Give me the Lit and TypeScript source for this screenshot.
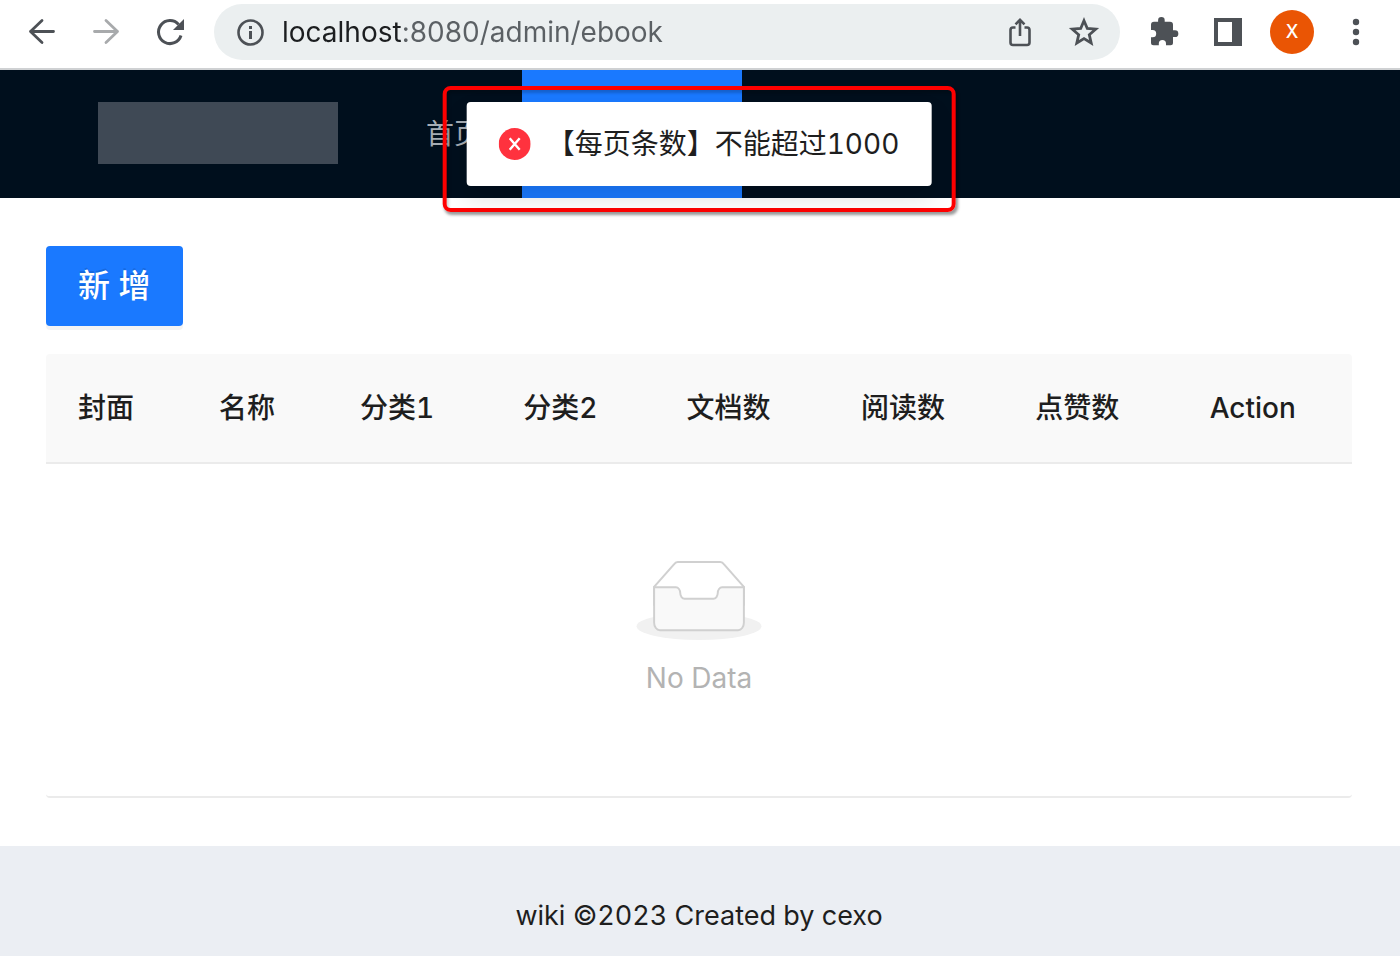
import { LitElement, html, svg, css } from "lit";
import { customElement, property } from "lit/decorators.js";

const glyphs = {
  back: svg`<path d="M27.500 15.500H4.500M16 4.500L4.500 15.500L16 26.500" fill="none" stroke="currentColor" stroke-width="2.800" stroke-linecap="round" stroke-linejoin="round"/>`,
  forward: svg`<path d="M4.500 15.500H27.500M16 4.500L27.500 15.500L16 26.500" fill="none" stroke="currentColor" stroke-width="2.800" stroke-linecap="round" stroke-linejoin="round"/>`,
  reload: svg`<path d="M27 19.500A11.500 11.500 0 1 1 24.600 8.400" fill="none" stroke="currentColor" stroke-width="3"/><path d="M30 3V14H19Z" fill="currentColor"/>`,
  info: svg`<circle cx="16.500" cy="16.500" r="12" fill="none" stroke="currentColor" stroke-width="2.600"/><path d="M15 10h3v3h-3zM15 15h3v8h-3z" fill="currentColor"/>`,
  share: svg`<path d="M11.500 11.500H9a2.500 2.500 0 0 0-2.500 2.500v12.500A2.500 2.500 0 0 0 9 29h14a2.500 2.500 0 0 0 2.500-2.500V14a2.500 2.500 0 0 0-2.500-2.500h-2.500M16 20V4M11.500 8.300L16 3.800l4.500 4.500" fill="none" stroke="currentColor" stroke-width="2.600"/>`,
  star: svg`<path d="M16 4.700l3.300 7.800 8.400.7-6.400 5.500 1.900 8.300L16 22.600 8.800 27l1.900-8.300-6.400-5.500 8.400-.7z" fill="none" stroke="currentColor" stroke-width="2.800" stroke-linejoin="miter"/>`,
  puzzle: svg`<path d="M26 14.500h-2V9a3 3 0 0 0-3-3h-5.300V4.600a3.300 3.300 0 0 0-6.600 0V6H5a3 3 0 0 0-3 3v5.300h1.600a3.600 3.600 0 0 1 0 7.200H2V27a2.500 2.500 0 0 0 2.500 2.500h5.300v-1.600a3.600 3.600 0 0 1 7.200 0v1.600h4.500A2.500 2.500 0 0 0 24 27v-5.800h2a3.350 3.350 0 0 0 0-6.700z" fill="currentColor" transform="translate(1 -.200)"/>`,
  panel: svg`<path d="M2 2h28v28H2zM6 6v20h14V6z" fill="currentColor" fill-rule="evenodd"/>`,
  more: svg`<g fill="currentColor"><circle cx="16" cy="6" r="3.200"/><circle cx="16" cy="16" r="3.200"/><circle cx="16" cy="26" r="3.200"/></g>`,
};

@customElement("ui-glyph")
class UiGlyph extends LitElement {
  @property() name: keyof typeof glyphs = "info";
  static styles = css`
    :host { display: block; width: 32px; height: 32px; }
    svg { display: block; }
  `;
  render() {
    return html`<svg width="32" height="32" viewBox="0 0 32 32" aria-hidden="true">${glyphs[this.name]}</svg>`;
  }
}

@customElement("browser-bar")
class BrowserBar extends LitElement {
  static styles = css`
    :host {
      display: flex; align-items: center; box-sizing: border-box;
      padding: 4px 28px 8px 26px; background: #fff;
      border-bottom: 2px solid #cfd1d3; color: #4d5156;
      font-family: Inter, "Noto Sans CJK SC", sans-serif;
    }
    button { border: 0; padding: 0; background: none; color: inherit; font: inherit; cursor: pointer; }
    .nav { display: flex; gap: 32px; margin-right: 28px; }
    .nav button:disabled { color: #a8aaac; }
    .address {
      flex: 1; min-width: 0; display: flex; align-items: center;
      height: 56px; padding: 0 20px; border-radius: 28px; background: #ebeff0;
    }
    .url {
      flex: 1; min-width: 0; margin: 0 16px; padding: 0; border: 0; outline: 0;
      height: 40px; font: 400 28px/40px Inter, sans-serif; color: #4d5156;
      background: linear-gradient(90deg, #1c1e20 120px, #5b6064 120px);
      -webkit-background-clip: text; background-clip: text;
      -webkit-text-fill-color: transparent;
    }
    .actions { display: flex; gap: 32px; }
    .tools { display: flex; align-items: center; gap: 32px; margin-left: 28px; }
    .avatar {
      width: 44px; height: 44px; margin: 0 -6px; border-radius: 50%;
      background: #ea5504; color: #fff; font-size: 18px; line-height: 44px; font-weight: 500;
    }
  `;
  render() {
    return html`
      <div class="nav">
        <button aria-label="Back"><ui-glyph name="back"></ui-glyph></button>
        <button aria-label="Forward" disabled><ui-glyph name="forward"></ui-glyph></button>
        <button aria-label="Reload"><ui-glyph name="reload"></ui-glyph></button>
      </div>
      <div class="address">
        <button aria-label="Site information"><ui-glyph name="info"></ui-glyph></button>
        <input class="url" type="text" aria-label="Address" value="localhost:8080/admin/ebook" spellcheck="false" />
        <div class="actions">
          <button aria-label="Share"><ui-glyph name="share"></ui-glyph></button>
          <button aria-label="Bookmark"><ui-glyph name="star"></ui-glyph></button>
        </div>
      </div>
      <div class="tools">
        <button aria-label="Extensions"><ui-glyph name="puzzle"></ui-glyph></button>
        <button aria-label="Side panel"><ui-glyph name="panel"></ui-glyph></button>
        <button class="avatar">X</button>
        <button aria-label="Menu"><ui-glyph name="more"></ui-glyph></button>
      </div>
    `;
  }
}

@customElement("app-root")
class AppRoot extends LitElement {
  static styles = css`
    :host {
      display: flex; flex-direction: column; min-height: 100vh; position: relative;
      background: #fff; color: #1e1e1e;
      font: 400 28px/44px Inter, "Noto Sans CJK SC", sans-serif;
      font-variant-numeric: tabular-nums;
    }
    .header { display: flex; height: 128px; padding: 0 98px; background: #000f1d; }
    .logo { width: 240px; height: 62px; margin: 32px 48px 0 0; background: #3f4955; }
    .menu { display: flex; margin: 0; padding: 0; list-style: none; line-height: 128px; }
    .menu a { display: block; padding: 0 40px; color: #a6adb4; text-decoration: none; }
    .current { width: 220px; background: #1a79ff; }
    .frame {
      position: absolute; top: 86px; left: 50%; transform: translateX(-50%);
      margin-left: -1px; padding: 12px 20px 22px; white-space: nowrap;
      border: 4px solid #fe0000; border-radius: 8px;
      box-shadow: 2px 3px 3px rgba(0, 0, 0, 0.4), inset 2px 3px 3px rgba(0, 0, 0, 0.2);
    }
    .toast {
      display: flex; align-items: center; gap: 16px; padding: 20px 32px;
      background: #fff; border-radius: 4px; box-shadow: 0 12px 24px rgba(0, 0, 0, 0.12);
    }
    .toast svg { display: block; }
    .content { padding: 48px 48px 48px 46px; }
    .add {
      display: block; height: 80px; padding: 0 32px; border: 0; border-radius: 4px;
      background: #1a79ff; color: #fff; font: inherit; font-size: 32px; font-weight: 500; cursor: pointer;
      box-shadow: 0 4px 0 rgba(0, 0, 0, 0.045); text-shadow: 0 -2px 0 rgba(0, 0, 0, 0.12);
    }
    .table { width: 100%; margin-top: 28px; border-collapse: separate; border-spacing: 0; table-layout: fixed; }
    .short { width: 10.8%; }
    .medium { width: 12.5%; }
    .long { width: 13.35%; }
    .table th {
      padding: 32px; text-align: left; font-weight: 500; white-space: nowrap;
      background: #f9f9f9; border-bottom: 2px solid #ebebeb;
    }
    .table th:first-child { border-top-left-radius: 4px; }
    .table th:last-child { border-top-right-radius: 4px; }
    .table td { padding: 96px 32px; border-bottom: 2px solid #ebebeb; border-radius: 0 0 4px 4px; text-align: center; color: #b3b3b3; }
    .table td svg { display: block; margin: 0 auto 16px; }
    .footer { flex: 1; padding: 48px 48px 18px 46px; text-align: center; background: #ebeef3; font-size: 27px; }
  `;

  columns = ["封面", "名称", "分类1", "分类2", "文档数", "阅读数", "点赞数", "Action"];

  render() {
    return html`
      <browser-bar></browser-bar>
      <header class="header">
        <div class="logo"></div>
        <nav>
          <ul class="menu">
            <li><a href="#">首页</a></li>
            <li class="current"></li>
          </ul>
        </nav>
      </header>
      <main class="content">
        <button class="add">新 增</button>
        <table class="table">
          <colgroup>
            <col class="short" span="2" />
            <col class="medium" span="2" />
            <col class="long" span="4" />
          </colgroup>
          <thead>
            <tr>${this.columns.map((c) => html`<th scope="col">${c}</th>`)}</tr>
          </thead>
          <tbody>
            <tr>
              <td colspan="8">
                <svg width="128" height="80" viewBox="0 0 64 41" aria-hidden="true">
                  <g transform="translate(0 1)" fill="none">
                    <ellipse fill="#f1f1f1" cx="32" cy="33" rx="32" ry="7" />
                    <g stroke="#d0d0d0">
                      <path fill="#fff" d="M55 12.760L44.854 1.258C44.367.474 43.656 0 42.907 0H21.093c-.749 0-1.460.474-1.947 1.257L9 12.761V22h46v-9.240z" />
                      <path fill="#f9f9f9" d="M41.613 15.931c0-1.605.994-2.930 2.227-2.931H55v18.137C55 33.260 53.680 35 52.050 35h-40.100C10.320 35 9 33.259 9 31.137V13h11.160c1.233 0 2.227 1.323 2.227 2.928v.022c0 1.605 1.005 2.901 2.237 2.901h14.752c1.232 0 2.237-1.308 2.237-2.913v-.007z" />
                    </g>
                  </g>
                </svg>
                No Data
              </td>
            </tr>
          </tbody>
        </table>
      </main>
      <footer class="footer">wiki ©2023 Created by cexo</footer>
      <div class="frame">
        <div class="toast" role="alert">
          <svg width="32" height="32" viewBox="0 0 32 32" aria-hidden="true">
            <circle cx="16" cy="16" r="16" fill="#ff323e" />
            <path d="M11 10.200L21 21.800M21 10.200L11 21.800" stroke="#fff" stroke-width="2.400" />
          </svg>
          <span>【每页条数】不能超过1000</span>
        </div>
      </div>
    `;
  }
}
